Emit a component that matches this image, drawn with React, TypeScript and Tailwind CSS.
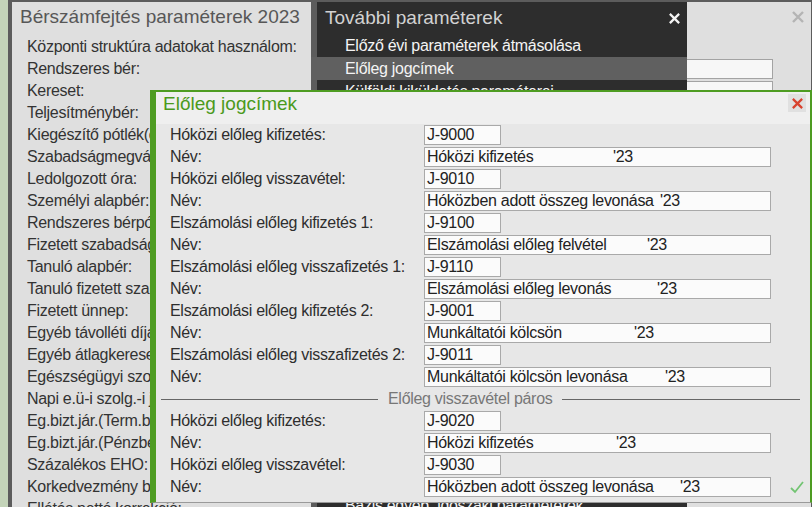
import React from "react";

const LEFT_LABELS = [
  "Központi struktúra adatokat használom:",
  "Rendszeres bér:",
  "Kereset:",
  "Teljesítménybér:",
  "Kiegészítő pótlék(ok):",
  "Szabadságmegváltás:",
  "Ledolgozott óra:",
  "Személyi alapbér:",
  "Rendszeres bérpótlék:",
  "Fizetett szabadság:",
  "Tanuló alapbér:",
  "Tanuló fizetett szabadság:",
  "Fizetett ünnep:",
  "Egyéb távolléti díjak:",
  "Egyéb átlagkereset:",
  "Egészségügyi szolgáltatás:",
  "Napi e.ü-i szolg.-i járulék:",
  "Eg.bizt.jár.(Term.beni):",
  "Eg.bizt.jár.(Pénzbeli):",
  "Százalékos EHO:",
  "Korkedvezmény biztosítás:",
  "Ellátás nettó korrekció:",
];

const MENU_ITEMS = [
  "Előző évi paraméterek átmásolása",
  "Előleg jogcímek",
  "Külföldi kiküldetés paraméterei",
  "Cafeteria paraméterek",
  "Munkaidőkeret paraméterek",
  "Szabadság paraméterek",
  "Táppénz paraméterek",
  "Levonások paraméterei",
  "Jövedelem jogcímek",
  "Adókedvezmények",
  "Járulék paraméterek",
  "Bérkarton beállítások",
  "Nyomtatvány paraméterek",
  "Utalás paraméterek",
  "Könyvelési paraméterek",
  "Export paraméterek",
  "Import paraméterek",
  "Egyéb beállítások",
  "Jelenléti ív paraméterek",
  "Munkaszerződés paraméterek",
  "Bázis egyéb, időszaki paraméterek",
];

type Row =
  | { kind: "code"; label: string; code: string }
  | { kind: "name"; name: string; tail: string }
  | { kind: "sep"; label: string };

const ROWS: Row[] = [
  { kind: "code", label: "Hóközi előleg kifizetés:", code: "J-9000" },
  { kind: "name", name: "Hóközi kifizetés", tail: "w-[186px]" },
  { kind: "code", label: "Hóközi előleg visszavétel:", code: "J-9010" },
  { kind: "name", name: "Hóközben adott összeg levonása", tail: "w-[233px]" },
  { kind: "code", label: "Elszámolási előleg kifizetés 1:", code: "J-9100" },
  { kind: "name", name: "Elszámolási előleg felvétel", tail: "w-[220px]" },
  { kind: "code", label: "Elszámolási előleg visszafizetés 1:", code: "J-9110" },
  { kind: "name", name: "Elszámolási előleg levonás", tail: "w-[230px]" },
  { kind: "code", label: "Elszámolási előleg kifizetés 2:", code: "J-9001" },
  { kind: "name", name: "Munkáltatói kölcsön", tail: "w-[207px]" },
  { kind: "code", label: "Elszámolási előleg visszafizetés 2:", code: "J-9011" },
  { kind: "name", name: "Munkáltatói kölcsön levonása", tail: "w-[238px]" },
  { kind: "sep", label: "Előleg visszavétel páros" },
  { kind: "code", label: "Hóközi előleg kifizetés:", code: "J-9020" },
  { kind: "name", name: "Hóközi kifizetés", tail: "w-[189px]" },
  { kind: "code", label: "Hóközi előleg visszavétel:", code: "J-9030" },
  { kind: "name", name: "Hóközben adott összeg levonása", tail: "w-[253px]" },
];

function Cross({ className }: { className: string }) {
  return (
    <svg viewBox="0 0 14 14" className={className} fill="none" stroke="currentColor" strokeWidth="2.4">
      <path d="M2 2L12 12M12 2L2 12" />
    </svg>
  );
}

export default function App() {
  return (
    <div className="relative w-[812px] h-[507px] overflow-hidden bg-[#c4d4b9] font-['Liberation_Sans',Arial,sans-serif] text-[16px] tracking-[-0.3px]">
      {/* background window */}
      <div className="absolute left-[8px] top-0 right-0 bottom-0 bg-[#dfdfdf] border-l-4 border-t-2 border-r border-[#5c5c5c]">
        <div className="flex items-center justify-between h-[30px] pl-[8px] pr-[6px]">
          <span className="text-[19px] text-[#575757] leading-[30px] tracking-normal">Bérszámfejtés paraméterek 2023</span>
          <Cross className="w-[14px] h-[14px] text-[#b4b4b4]" />
        </div>
        <div className="flex flex-col pt-[4px]">
          {LEFT_LABELS.map((l, i) => (
            <div key={i} className="flex items-center h-[22px] pl-[15px] pr-[38px]">
              <span className="text-[#333] whitespace-nowrap leading-[22px]">{l}</span>
              {(i === 1 || i === 2) && (
                <div className="ml-auto w-[250px] h-[20px] bg-[#f7f7f7] border border-[#a3a3a3]" />
              )}
            </div>
          ))}
        </div>
      </div>

      {/* dropdown menu */}
      <div className="absolute left-[311px] top-[2px] w-[376px] h-[540px] bg-[#2d2d2d] border-l-[6px] border-[#5c5c5c]">
        <div className="flex items-center justify-between h-[32px] pl-[8px] pr-[6px]">
          <span className="text-[19px] text-[#d2d2d2] tracking-normal">További paraméterek</span>
          <Cross className="w-[13px] h-[13px] text-[#f4f4f4]" />
        </div>
        {MENU_ITEMS.map((m, i) => (
          <div
            key={i}
            className={
              i === 1
                ? "h-[23px] leading-[23px] text-[#f4f4f4] bg-[#606060] -ml-[6px] pl-[34px]"
                : "h-[23px] pl-[28px] leading-[23px] text-[#f4f4f4]"
            }
          >
            {m}
          </div>
        ))}
      </div>

      {/* dialog */}
      <div className="absolute left-[150px] top-[90px] right-0 h-[413px] flex flex-col bg-[#e7e7e7] border-l-[6px] border-t-2 border-r-2 border-[#4e9c22] border-b border-b-[#9a9a9a]">
        <div className="flex items-start justify-between h-[32px] pl-[7px] pr-[4px] bg-[#efefef]">
          <span className="text-[19px] leading-[24px] text-[#4b9a1c] tracking-normal">Előleg jogcímek</span>
          <div className="mt-[2px] w-[18px] h-[18px] bg-[#e0e0e0] flex items-center justify-center">
            <Cross className="w-[13px] h-[13px] text-[#d8432f]" />
          </div>
        </div>
        <div className="flex flex-col">
          {ROWS.map((r, i) => {
            if (r.kind === "sep") {
              return (
                <div key={i} className="flex items-center h-[22px] pl-[5px] pr-[10px]">
                  <div className="w-[217px] h-px bg-[#666]" />
                  <span className="px-[10px] text-[#777] leading-[22px] whitespace-nowrap">{r.label}</span>
                  <div className="flex-1 h-px bg-[#666]" />
                </div>
              );
            }
            return (
              <div key={i} className="flex items-center h-[22px] pl-[14px]">
                <span className="w-[254px] text-[#2e2e2e] whitespace-nowrap leading-[22px]">
                  {r.kind === "code" ? r.label : "Név:"}
                </span>
                {r.kind === "code" ? (
                  <div className="w-[77px] h-[20px] bg-[#fbfbfb] border border-[#a9a9a9] pl-[2px] leading-[18px] text-[#222]">
                    {r.code}
                  </div>
                ) : (
                  <div className="flex w-[347px] h-[20px] bg-[#fbfbfb] border border-[#a9a9a9] pl-[2px] leading-[18px] text-[#222] whitespace-nowrap overflow-hidden">
                    <span className={r.tail}>{r.name}</span>
                    <span>'23</span>
                  </div>
                )}
                {i === ROWS.length - 1 && (
                  <svg viewBox="0 0 16 16" className="ml-auto mr-[5px] w-[16px] h-[16px]" fill="none" stroke="#72c472" strokeWidth="1.8">
                    <path d="M2 9L6 13L14 3" />
                  </svg>
                )}
              </div>
            );
          })}
        </div>
      </div>
    </div>
  );
}
